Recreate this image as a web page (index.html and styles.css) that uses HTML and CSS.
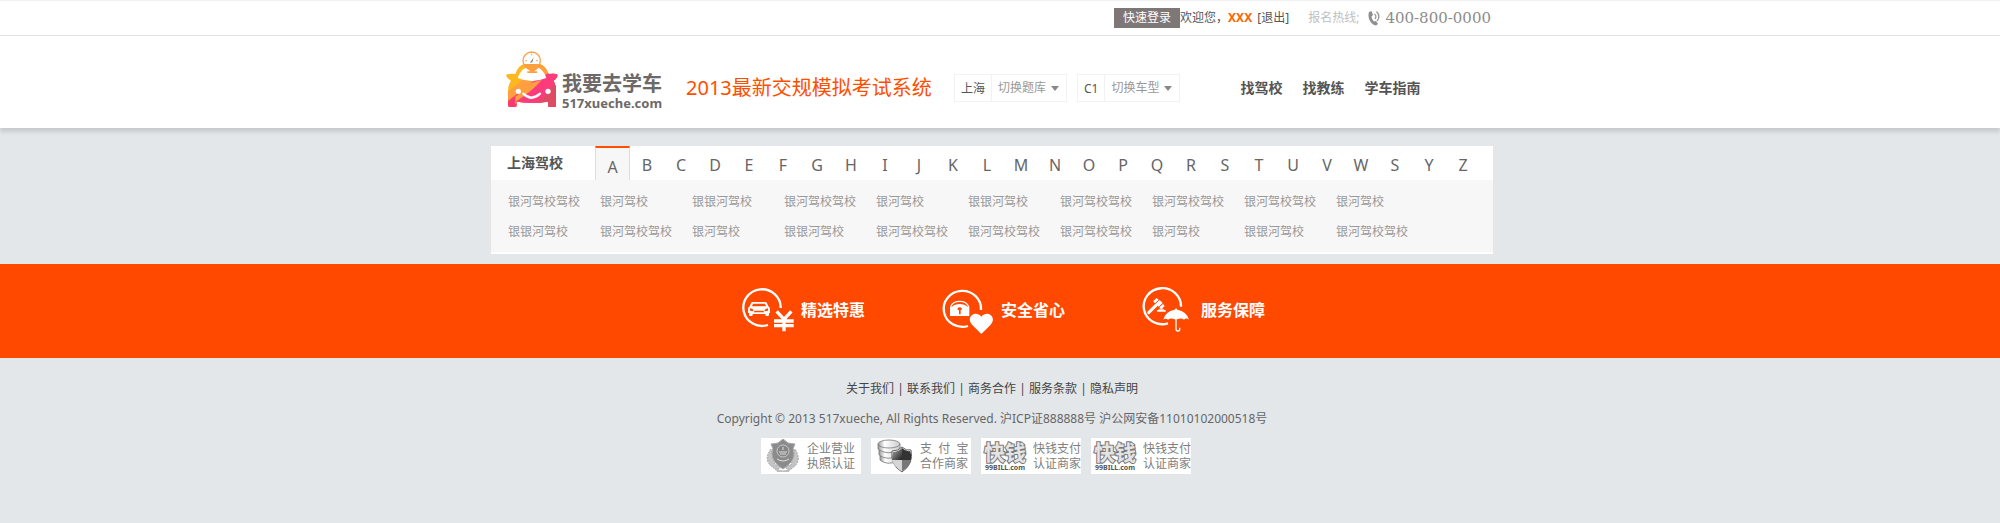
FILE: index.html
```
<!DOCTYPE html>
<html lang="zh-CN">
<head>
<meta charset="utf-8">
<title>2013最新交规模拟考试系统</title>
<link rel="stylesheet" href="styles.css">
</head>
<body>
<div class="topbar">
  <div class="wrap topbar-inner">
    <button class="login" type="button">快速登录</button>
    <span class="welcome">欢迎您，<b class="user">XXX</b> <a href="#">[退出]</a></span>
    <span class="hotline">报名热线;</span>
    <svg class="phone" viewBox="0 0 12 16" aria-hidden="true"><path d="M1 2 L3.500 1 L5 5 L3.500 6.500 C3.800 8.500 4.500 10 6 11.500 L8 11 L10 14 L8 15.500 C3 15 -1 8 1 2Z" fill="#8f8f8f"/><path d="M6.500 4 Q9 6 7 9 M8.500 1.500 Q13 6 9 11" fill="none" stroke="#999" stroke-width="1.300"/></svg>
    <span class="tel">400-800-0000</span>
  </div>
</div>
<header class="header">
  <div class="wrap header-inner">
    <a class="logo" href="#">
      <svg class="logo-car" viewBox="15 18 162 168" aria-hidden="true">
        <defs><clipPath id="car"><path d="M18 90 Q24 85 46 87 Q54 62 72 57 H120 Q138 64 146 87 Q168 84 173 90 Q172 100 160 107 Q168 120 168 140 V182 Q168 186 163 186 H149 Q144 186 144 181 V170 Q96 176 50 170 V181 Q50 186 45 186 H29 Q24 186 24 181 V140 Q24 120 33 107 Q20 100 18 90Z"/></clipPath></defs>
        <circle cx="95" cy="47" r="26" fill="#fff" stroke="#ffa047" stroke-width="4"/>
        <path d="M95 26V31M76 47H81M109 47H114" stroke="#ffa047" stroke-width="3"/>
        <path d="M90 54 L101 37 L97 51Z" fill="#8a7060"/>
        <g clip-path="url(#car)">
          <path d="M10 50H180V190H10Z" fill="#fdb81e"/>
          <path d="M70 50H180V190H10V150L80 95Z" fill="#ff9f40"/>
          <path d="M150 78H180V190H60L56 168L150 100Z" fill="#fb3b7c"/>
          <path d="M180 115V190H90L104 170Q145 152 157 112Z" fill="#de4c64"/>
          <path d="M15 175L60 140V190H15Z" fill="#fb3b6f"/>
          <path d="M46 155L105 108L150 90V112L66 176H46Z" fill="#ff9f40"/>
          <path d="M90 115L150 82H180V120L120 175H68L50 190V168Q95 140 125 105Z" fill="#fb3b7c"/>
          <path d="M168 116V190H120L110 172Q143 155 154 122Z" fill="#de4c64"/>
        </g>
        <path d="M53 99 Q61 74 78 68 H116 Q131 76 139 99 Q96 117 53 99Z" fill="#fff"/>
        <path d="M76 64H120L112 72Q105 76 103 79H111V84H82V79H91Q88 74 80 71Z" fill="#ff9f40"/>
        <circle cx="55" cy="139" r="8" fill="#fff"/><circle cx="144" cy="139" r="8" fill="#fff"/>
        <path d="M70 146Q94 170 120 146" fill="none" stroke="#fff" stroke-width="7" stroke-linecap="round"/>
      </svg>
      <span class="logo-text"><span class="logo-cn">我要去学车</span><span class="logo-en">517xueche.com</span></span>
    </a>
    <div class="header-main">
      <h1 class="title">2013最新交规模拟考试系统</h1>
      <div class="picker"><label for="bank">上海</label><select id="bank"><option>切换题库</option></select></div>
      <div class="picker"><label for="type">C1</label><select id="type"><option>切换车型</option></select></div>
      <nav class="nav"><a href="#">找驾校</a><a href="#">找教练</a><a href="#">学车指南</a></nav>
    </div>
  </div>
</header>
<main class="main">
  <div class="wrap panel">
    <div class="panel-head">
      <h2>上海驾校</h2>
      <nav class="letters"><a class="on" href="#">A</a><a href="#">B</a><a href="#">C</a><a href="#">D</a><a href="#">E</a><a href="#">F</a><a href="#">G</a><a href="#">H</a><a href="#">I</a><a href="#">J</a><a href="#">K</a><a href="#">L</a><a href="#">M</a><a href="#">N</a><a href="#">O</a><a href="#">P</a><a href="#">Q</a><a href="#">R</a><a href="#">S</a><a href="#">T</a><a href="#">U</a><a href="#">V</a><a href="#">W</a><a href="#">S</a><a href="#">Y</a><a href="#">Z</a></nav>
    </div>
    <div class="schools">
      <a href="#">银河驾校驾校</a><a href="#">银河驾校</a><a href="#">银银河驾校</a><a href="#">银河驾校驾校</a><a href="#">银河驾校</a><a href="#">银银河驾校</a><a href="#">银河驾校驾校</a><a href="#">银河驾校驾校</a><a href="#">银河驾校驾校</a><a href="#">银河驾校</a>
      <a href="#">银银河驾校</a><a href="#">银河驾校驾校</a><a href="#">银河驾校</a><a href="#">银银河驾校</a><a href="#">银河驾校驾校</a><a href="#">银河驾校驾校</a><a href="#">银河驾校驾校</a><a href="#">银河驾校</a><a href="#">银银河驾校</a><a href="#">银河驾校驾校</a>
    </div>
  </div>
</main>
<section class="band">
  <div class="features">
    <div class="feature">
      <svg viewBox="30 18 168 144" aria-hidden="true">
        <path d="M152 84A56 55 0 1 0 114 135" fill="none" stroke="#fff" stroke-width="7"/>
        <path fill="#fff" fill-rule="evenodd" d="M67 66H106Q109 66 111 70L115 79Q120 82 120 87V99H117V105Q117 108 113 108H109Q106 108 106 105V102H68V105Q68 108 64 108H60Q57 108 57 105V99H54V87Q54 82 59 79L63 70Q64 66 67 66ZM69 71L66 79H108L105 71ZM60 85V92L69 94L71 91Q67 85 60 85ZM114 85Q107 85 103 91L105 94L114 92ZM74 92L71 97H103L100 92Z"/>
        <path d="M140 94L162 118L184 94M162 116V154M132 123H191M132 137H191" fill="none" stroke="#fff" stroke-width="10"/>
      </svg><span>精选特惠</span>
    </div>
    <div class="feature">
      <svg viewBox="30 18 168 144" aria-hidden="true">
        <path d="M153 90A56 54 0 1 0 114 138" fill="none" stroke="#fff" stroke-width="7"/>
        <path d="M62 80Q68 64 89 64T116 80" fill="none" stroke="#fff" stroke-width="4"/>
        <path fill="#fff" fill-rule="evenodd" d="M60 80H66Q74 72 89 72T112 80H118V108H60ZM83 84V90H87V103H92V90H95V84Q89 80 83 84Z"/>
        <path d="M154 162L126 134C106 112 136 88 154 110C172 88 202 112 182 134Z" fill="#fff"/>
      </svg><span>安全省心</span>
    </div>
    <div class="feature">
      <svg viewBox="30 18 168 144" aria-hidden="true">
        <path d="M153 80A56 54 0 1 0 114 130" fill="none" stroke="#fff" stroke-width="7"/>
        <path d="M56 98L78 76" stroke="#fff" stroke-width="9" stroke-linecap="round"/>
        <path d="M69 64L80 54L86 59L75 70ZM77 71L89 60L98 69L86 80ZM88 82L99 72L104 78L94 88ZM84 89Q94 82 104 89ZM81 90H107V95H81Z" fill="#fff"/>
        <path d="M100 119Q106 94 134 89Q138 80 142 89Q170 94 177 119Q169 112 162 119Q154 113 142 118H134Q122 113 114 119Q107 113 100 119Z" fill="#fff"/>
        <path d="M138 115V147Q138 153 144 153T149 147V143" fill="none" stroke="#fff" stroke-width="4"/>
      </svg><span>服务保障</span>
    </div>
  </div>
</section>
<footer class="footer">
  <nav class="foot-links"><a href="#">关于我们</a><i>|</i><a href="#">联系我们</a><i>|</i><a href="#">商务合作</a><i>|</i><a href="#">服务条款</a><i>|</i><a href="#">隐私声明</a></nav>
  <p class="copy">Copyright © 2013 517xueche, All Rights Reserved. 沪ICP证888888号 沪公网安备11010102000518号</p>
  <div class="badges">
    <a class="badge" href="#">
      <svg viewBox="0 0 46 36" aria-hidden="true">
        <path d="M10 11Q3 20 9 27L15 32L21 29H23L29 32L35 27Q40 20 34 11L30 27H14Z" fill="#c4c4c4" stroke="#a5a5a5" stroke-dasharray="2 1"/>
        <path d="M22 1L27 5L34 6Q31 10 33 16Q33 24 22 31Q11 24 11 16Q13 10 10 6L17 5Z" fill="#8b8b8b" stroke="#aaa"/>
        <circle cx="22" cy="13" r="6" fill="#858585" stroke="#c8c8c8" stroke-width="1"/>
        <path d="M18 14H26M19 16H25M22 9V12M16 21Q22 25 28 21" stroke="#ddd" fill="none"/>
        <path d="M14 29Q22 36 30 29L28 34H16Z" fill="#bdbdbd"/>
      </svg><span>企业营业<br>执照认证</span>
    </a>
    <a class="badge alipay" href="#">
      <svg viewBox="0 0 49 36" aria-hidden="true">
        <defs><linearGradient id="coin"><stop offset="0" stop-color="#999"/><stop offset=".3" stop-color="#fff"/><stop offset="1" stop-color="#ccc"/></linearGradient><linearGradient id="dark" x2="1" y2="1"><stop offset="0" stop-color="#aaa"/><stop offset="1" stop-color="#222"/></linearGradient></defs>
        <g fill="url(#coin)" stroke="#777" stroke-width=".8"><path d="M9 18V22Q16 28 27 23V18Z"/><path d="M8 12V17Q16 23 28 18V12Z"/><path d="M7 6V11Q16 18 29 12V6Z"/><ellipse cx="18" cy="6" rx="11" ry="4"/></g>
        <path d="M31 9Q35 13 40 12Q43 26 31 34Q19 27 21 13Q27 13 31 9Z" fill="#eee" stroke="#666"/>
        <path d="M31 10V22H21Q21 18 22 14Q27 14 31 10Z" fill="url(#dark)"/><path d="M31 22H40Q38 30 31 33Z" fill="#777"/><path d="M31 10Q35 14 39 13Q41 17 40 22H31Z" fill="#333"/><path d="M31 22V33Q23 29 21 22Z" fill="#d5d5d5"/>
      </svg><span>支&nbsp; 付&nbsp; 宝<br>合作商家</span>
    </a>
    <a class="badge" href="#"><span class="bill-logo"><b>快钱</b><small>99BILL.com</small></span><span>快钱支付<br>认证商家</span></a>
    <a class="badge" href="#"><span class="bill-logo"><b>快钱</b><small>99BILL.com</small></span><span>快钱支付<br>认证商家</span></a>
  </div>
</footer>
</body>
</html>
```
FILE: styles.css
```
* { box-sizing: border-box; }
body {
  margin: 0;
  background: #e3e7ea;
  color: #555;
  font: 12px/20px "Noto Sans", "Noto Sans CJK SC", sans-serif;
}
a { color: inherit; text-decoration: none; }
h1, h2, p { margin: 0; font-weight: normal; }
i { font-style: normal; }
.topbar, .header, .main, .band, .footer { padding-right: 16px; }
.wrap { max-width: 1002px; margin: 0 auto; }

.topbar { background: #fff; border-top: 1px solid #eef2f5; border-bottom: 1px solid #e2e2e2; }
.topbar-inner { display: flex; align-items: center; justify-content: flex-end; height: 34px; padding-right: 2px; }
.login {
  height: 20px; padding: 0 9px; border: 0;
  background: #7d7777; color: #fff; font: inherit;
}
.user { margin-right: 2px; color: #f60; }
.hotline { margin-left: 19px; color: #bfbfbf; }
.phone { width: 12px; height: 16px; margin: 0 5px 0 9px; }
.tel { color: #8c8c8c; font: 15px/20px "DejaVu Serif", serif; }

.header { background: #fff; box-shadow: 0 4px 4px rgba(0, 0, 0, .12); }
.header-inner { display: flex; align-items: flex-start; height: 92px; padding-left: 14px; }
.logo { display: flex; align-items: flex-start; gap: 3px; width: 181px; padding-top: 15px; }
.logo-car { width: 54px; height: 56px; flex: none; }
.logo-text { display: flex; flex-direction: column; padding-top: 23px; color: #6d6968; font-weight: bold; white-space: nowrap; }
.logo-cn { font-size: 20px; line-height: 20px; }
.logo-en { font-size: 13px; line-height: 18px; }
.header-main { display: flex; align-items: center; padding-top: 38px; }
.title { width: 268px; color: #ff4e00; font-size: 20px; line-height: 28px; white-space: nowrap; }
.picker { display: flex; height: 28px; margin-right: 10px; border: 1px solid #f2f2f2; line-height: 26px; }
.picker label { padding: 1px 6px 0; border-right: 1px solid #f2f2f2; }
.picker select {
  width: 74px; padding: 0 0 0 6px; border: 0; appearance: none; color: #999; font: inherit;
  background: #fff url("data:image/svg+xml,%3Csvg xmlns='http://www.w3.org/2000/svg' width='8' height='5'%3E%3Cpath d='M0 0H8L4 5Z' fill='%23888'/%3E%3C/svg%3E") no-repeat 59px 11px;
}
.nav { display: flex; gap: 20px; margin-left: 50px; font-size: 14px; font-weight: bold; }

.panel { margin-top: 18px; border-bottom: 2px solid #fff; }
.panel-head { display: flex; height: 34px; background: #fff; }
.panel-head h2 { width: 104px; padding: 7px 0 0 16px; font-size: 14px; font-weight: bold; }
.letters { display: flex; flex: 1; font-size: 16px; line-height: 39px; text-align: center; color: #666; }
.letters a { width: 34px; }
.letters .on { width: 35px; border: 1px solid #ddd; border-width: 2px 1px 0; border-top-color: #ff4e00; background: #f7f7f7; }
.schools {
  display: grid; grid-template-columns: repeat(10, 92px); grid-auto-rows: 30px;
  padding: 7px 0 5px 17px; background: #f7f7f7; color: #999; line-height: 30px;
}

.band { margin-top: 10px; background: #ff4800; }
.features { display: grid; grid-template-columns: repeat(3, 200px); justify-content: center; height: 94px; padding-bottom: 2px; }
.feature { display: flex; align-items: center; gap: 5px; padding-left: 48px; color: #fff; font-size: 16px; font-weight: bold; }
.feature svg { width: 56px; height: 48px; flex: none; }

.footer { padding-top: 21px; padding-bottom: 49px; text-align: center; }
.foot-links { display: flex; justify-content: center; color: #444; }
.foot-links i { width: 13px; }
.copy { margin-top: 10px; color: #666; }
.badges { display: flex; justify-content: center; gap: 10px; margin-top: 9px; padding-right: 32px; }
.badge { display: flex; align-items: center; width: 100px; height: 36px; background: #fff; color: #808080; line-height: 15px; text-align: left; white-space: nowrap; }
.badge svg { width: 46px; height: 36px; flex: none; }
.alipay svg { width: 49px; }
.bill-logo { display: flex; flex-direction: column; align-items: center; flex: none; width: 52px; padding-right: 4px; }
.bill-logo b { color: #e4e4e4; font-size: 21px; line-height: 24px; -webkit-text-stroke: 2px #777; paint-order: stroke fill; }
.bill-logo small { color: #555; font-size: 7px; font-weight: bold; line-height: 8px; }
```
